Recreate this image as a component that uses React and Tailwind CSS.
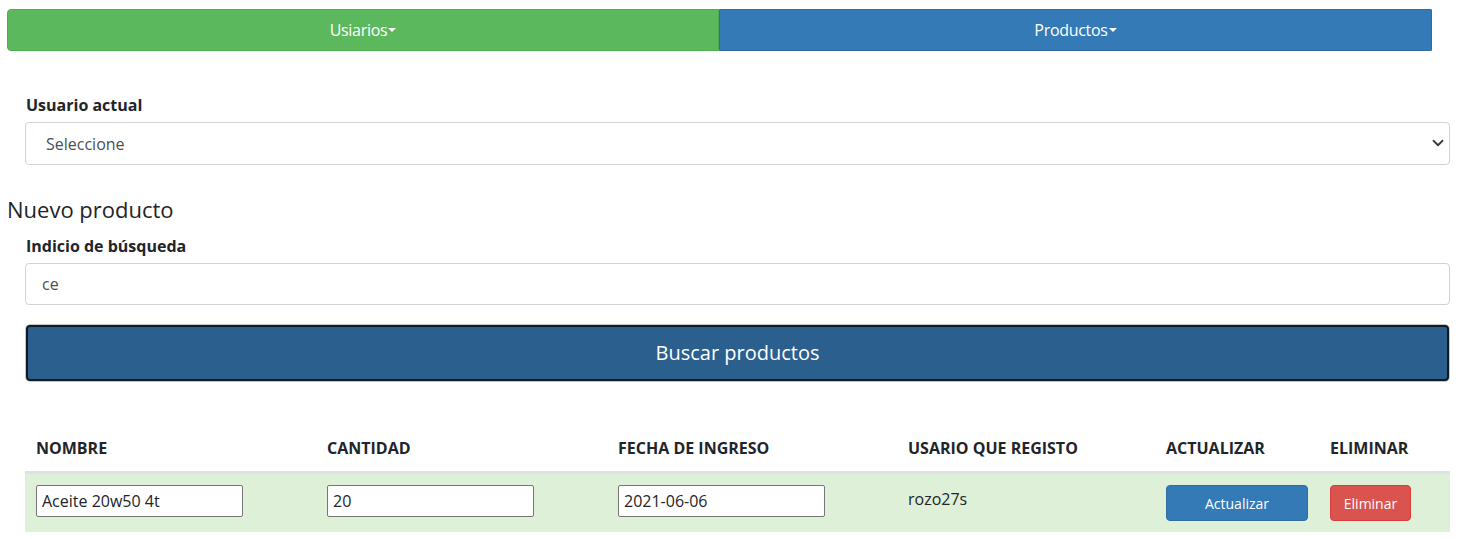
import { useState } from "react";

const font = { fontFamily: '"Open Sans", "Noto Sans", sans-serif' };

function Caret() {
  return (
    <span className="ml-[1px] inline-block h-0 w-0 border-x-[4px] border-t-[4px] border-x-transparent border-t-white align-middle" />
  );
}

function Row({ producto, setProducto }) {
  return (
    <tr className="bg-[#dff0d8] align-top">
      <td className="px-[11px] py-[11px]">
        <input
          value={producto.nombre}
          onChange={(e) => setProducto({ ...producto, nombre: e.target.value })}
          className="h-[32px] w-[207px] rounded-[2px] border border-[#767676] bg-white px-[5px] text-[16px] text-[#212529]"
        />
      </td>
      <td className="px-[11px] py-[11px]">
        <input
          value={producto.cantidad}
          onChange={(e) => setProducto({ ...producto, cantidad: e.target.value })}
          className="h-[32px] w-[207px] rounded-[2px] border border-[#767676] bg-white px-[5px] text-[16px] text-[#212529]"
        />
      </td>
      <td className="px-[11px] py-[11px]">
        <input
          value={producto.fecha}
          onChange={(e) => setProducto({ ...producto, fecha: e.target.value })}
          className="h-[32px] w-[207px] rounded-[2px] border border-[#767676] bg-white px-[5px] text-[16px] text-[#212529]"
        />
      </td>
      <td className="px-[11px] pt-[13px] pb-[11px] text-[16px] text-[#212529]">{producto.usuario}</td>
      <td className="px-[11px] py-[11px]">
        <button className="h-[36px] w-[142px] rounded-[4px] border border-[#2e6da4] bg-[#337ab7] text-[14px] text-white">
          Actualizar
        </button>
      </td>
      <td className="px-[11px] py-[11px]">
        <button className="h-[36px] w-[81px] rounded-[4px] border border-[#d43f3a] bg-[#d9534f] text-[14px] text-white">
          Eliminar
        </button>
      </td>
    </tr>
  );
}

export default function App() {
  const [busqueda, setBusqueda] = useState("ce");
  const [producto, setProducto] = useState({
    nombre: "Aceite 20w50 4t",
    cantidad: "20",
    fecha: "2021-06-06",
    usuario: "rozo27s",
  });

  return (
    <div className="min-h-[539px] bg-white text-[#212529]" style={font}>
      {/* Menu */}
      <div className="flex px-[7px] pt-[9px]">
        <button className="flex h-[42px] w-[712px] items-center justify-center rounded-l-[4px] border border-[#4cae4c] bg-[#5cb85c] text-[16px] tracking-[-0.3px] text-white">
          Usiarios<Caret />
        </button>
        <button className="flex h-[42px] w-[713px] items-center justify-center rounded-r-[1px] border border-[#2e6da4] bg-[#337ab7] text-[16px] tracking-[-0.3px] text-white">
          Productos<Caret />
        </button>
      </div>

      {/* Usuario actual */}
      <div className="pl-[25px] pr-[13px] pt-[42px]">
        <label className="mb-[5px] block pl-[1px] text-[16px] font-bold leading-[24px]">Usuario actual</label>
        <div className="relative">
          <select className="h-[43px] w-full appearance-none rounded-[4px] border border-[#ced4da] bg-white px-[20px] text-[16px] text-[#495057]">
            <option>Seleccione</option>
          </select>
          <svg
            className="pointer-events-none absolute right-[6px] top-[15px]"
            width="12"
            height="12"
            viewBox="0 0 16 16"
          >
            <path d="M2 5l6 6 6-6" fill="none" stroke="#343a40" strokeWidth="2.4" strokeLinecap="round" strokeLinejoin="round" />
          </svg>
        </div>
      </div>

      {/* Nuevo producto */}
      <h2 className="mt-[30px] px-[7px] text-[22px] leading-[28px]">Nuevo producto</h2>
      <div className="pl-[25px] pr-[13px] pt-[11px]">
        <label className="mb-[5px] block pl-[1px] text-[16px] font-bold leading-[24px]">Indicio de búsqueda</label>
        <input
          value={busqueda}
          onChange={(e) => setBusqueda(e.target.value)}
          className="h-[42px] w-full rounded-[4px] border border-[#ced4da] bg-white px-[16px] text-[16px] text-[#495057]"
        />
        <div className="mt-[19px] rounded-[5px] border border-[#c8c8c8]">
          <button className="h-[56px] w-full rounded-[4px] border-2 border-[#0f1a24] bg-[#2b5f8d] text-[20px] text-white">
            Buscar productos
          </button>
        </div>
      </div>

      {/* Tabla */}
      <div className="pl-[25px] pr-[13px] pt-[54px]">
        <table className="w-full border-collapse text-left">
          <thead>
            <tr className="border-b-[3px] border-[#dee2e6]">
              <th className="w-[291px] px-[11px] pb-[11px] text-[16px] font-bold leading-[24px]">NOMBRE</th>
              <th className="w-[291px] px-[11px] pb-[11px] text-[16px] font-bold leading-[24px]">CANTIDAD</th>
              <th className="w-[290px] px-[11px] pb-[11px] text-[16px] font-bold leading-[24px]">FECHA DE INGRESO</th>
              <th className="w-[258px] px-[11px] pb-[11px] text-[16px] font-bold leading-[24px]">USARIO QUE REGISTO</th>
              <th className="w-[162px] px-[11px] pb-[11px] text-[16px] font-bold leading-[24px]">ACTUALIZAR</th>
              <th className="px-[11px] pb-[11px] text-[16px] font-bold leading-[24px]">ELIMINAR</th>
            </tr>
          </thead>
          <tbody>
            <Row producto={producto} setProducto={setProducto} />
          </tbody>
        </table>
      </div>
    </div>
  );
}
